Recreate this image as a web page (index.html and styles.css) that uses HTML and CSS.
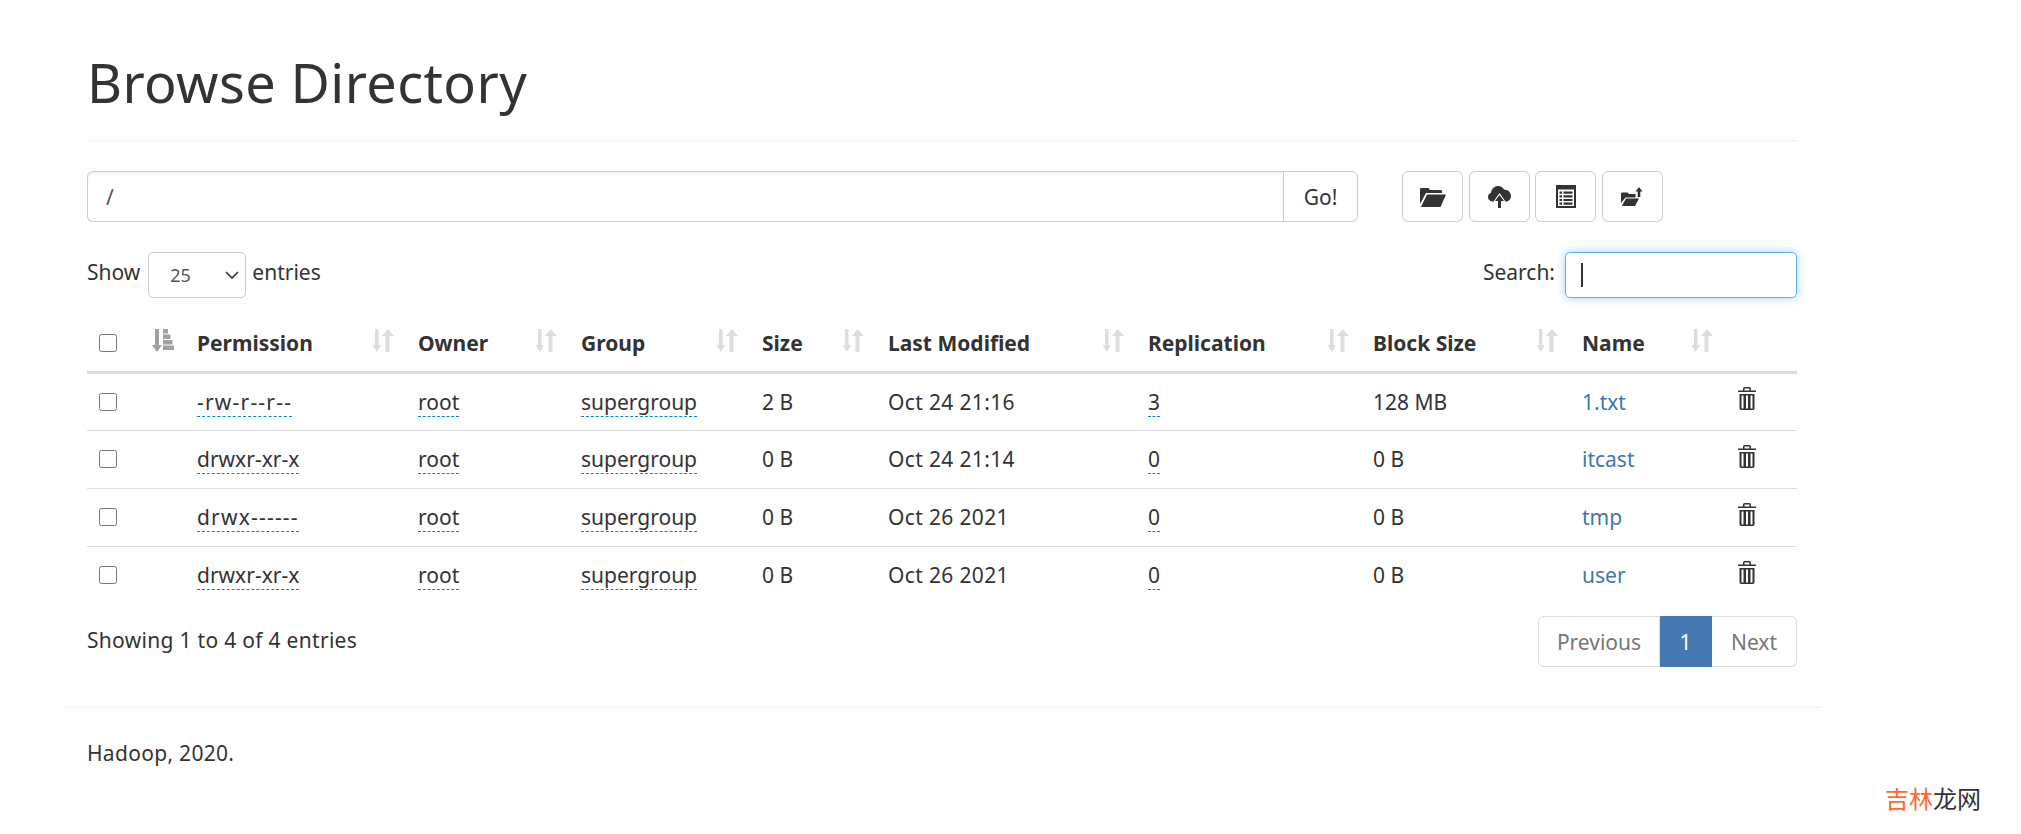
FILE: index.html
```html
<!DOCTYPE html>
<html lang="en">
<head>
    <meta charset="UTF-8">
    <title>Browse Directory</title>
    <link rel="stylesheet" href="styles.css">
</head>
<body>
    <svg class="defs" width="0" height="0">
        <symbol id="sort" viewBox="0 0 22 23">
            <path d="M3 0h3.500v16H9l-4.200 7L.5 16H3z"/>
            <path d="M13.500 23V7H10L15.800 0 22 7h-4.500v16z"/>
        </symbol>
        <symbol id="sort-num" viewBox="0 0 22 23">
            <path d="M3 0h4v16h3l-5 7-5-7h3z"/>
            <path d="M11 0h5v4.500h-5zM11 5.500h7.500V10H11zM11 11h9.500v4.500H11zM11 16.500h11V21H11z"/>
        </symbol>
        <symbol id="trash" viewBox="0 0 18 23">
            <path fill-rule="evenodd" d="M5 3.500V1.800C5 .7 5.700 0 6.800 0h4.400C12.300 0 13 .7 13 1.800v1.700h5v1.600H0V3.500zM6.500 3.500h5V1.400h-5zM1.500 7h15v14.300c0 1-.7 1.700-1.700 1.700H3.200c-1 0-1.700-.7-1.700-1.700zM3.500 8.500v13h2v-13zM8 8.500v13h2v-13zM12.500 8.500v13h2v-13z"/>
        </symbol>
    </svg>

    <div class="page">
        <div class="page-header">
            <h1>Browse Directory</h1>
        </div>

        <div class="toolbar">
            <div class="path-group">
                <input class="path-input" type="text" value="/">
                <button class="go-btn">Go!</button>
            </div>
            <div class="tool-btns">
                <button class="icon-btn">
                    <svg width="26" height="20" viewBox="0 0 26 20"><path d="M0 2.500C0 1.500.5 1 1.500 1h7L10 3h10.500C21.500 3 22 3.500 22 4.500V6H6L0 17zM7 7.500h19L20.500 20H1z"/></svg>
                </button>
                <button class="icon-btn">
                    <svg width="23" height="22" viewBox="0 0 23 22"><path d="M10 22v-7H7l4.500-6 4.500 6h-3v7zM5.500 15.500H4.800C2 15.500 0 13.300 0 11c0-2 1.300-3.500 3-4.200C3.500 3 6.300 0 10 0c2.700 0 4.800 1.400 6 3.600 3.700 0 7 2.800 7 6.400 0 3-2.100 5.500-5 5.500h-.5L11.500 7z"/></svg>
                </button>
                <button class="icon-btn">
                    <svg width="20" height="23" viewBox="0 0 20 23"><path fill-rule="evenodd" d="M0 0h20v23H0zM2 4.500v16.500h16V4.500zM3.500 6.500h2.500v2.200H3.500zM7.500 6.500h9v2.200h-9zM3.500 10.200h2.500v2.200H3.500zM7.500 10.200h9v2.200h-9zM3.500 13.900h2.500v2.200H3.500zM7.500 13.900h9v2.200h-9zM3.500 17.500h2.500v2.200H3.500zM7.500 17.500h9v2.200h-9z"/></svg>
                </button>
                <button class="icon-btn">
                    <svg width="22" height="19" viewBox="0 0 22 19"><path d="M0 7C0 6 .5 5.500 1.500 5.500h5L8 7h6.500v3.500h-10L0 16zM5 11.500h13L14 19H.8zM18 0l3.500 4.500h-2.200V10h-2.600V4.500h-2.200z"/></svg>
                </button>
            </div>
        </div>

        <div class="table-top">
            <label class="length">Show
                <select class="length-select"><option>25</option></select>
                entries</label>
            <label class="search">Search: <span class="search-box"><span class="caret"></span></span></label>
        </div>

        <table class="files">
            <colgroup>
                <col class="c-check"><col class="c-sort"><col class="c-perm"><col class="c-owner"><col class="c-group"><col class="c-size"><col class="c-mod"><col class="c-rep"><col class="c-block"><col class="c-name"><col class="c-del">
            </colgroup>
            <thead>
                <tr>
                    <th><input type="checkbox" class="check"></th>
                    <th><svg class="sort sort-active" width="22" height="23"><use href="#sort-num"/></svg></th>
                    <th><div class="th-in">Permission <svg class="sort" width="22" height="23"><use href="#sort"/></svg></div></th>
                    <th><div class="th-in">Owner <svg class="sort" width="22" height="23"><use href="#sort"/></svg></div></th>
                    <th><div class="th-in">Group <svg class="sort" width="22" height="23"><use href="#sort"/></svg></div></th>
                    <th><div class="th-in">Size <svg class="sort" width="22" height="23"><use href="#sort"/></svg></div></th>
                    <th><div class="th-in">Last Modified <svg class="sort" width="22" height="23"><use href="#sort"/></svg></div></th>
                    <th><div class="th-in">Replication <svg class="sort" width="22" height="23"><use href="#sort"/></svg></div></th>
                    <th><div class="th-in">Block Size <svg class="sort" width="22" height="23"><use href="#sort"/></svg></div></th>
                    <th><div class="th-in">Name <svg class="sort" width="22" height="23"><use href="#sort"/></svg></div></th>
                    <th></th>
                </tr>
            </thead>
            <tbody>
                <tr>
                    <td><input type="checkbox" class="check"></td><td></td>
                    <td><span class="editable dashes">-rw-r--r--</span></td>
                    <td><span class="editable">root</span></td>
                    <td><span class="editable">supergroup</span></td>
                    <td>2 B</td>
                    <td class="date">Oct 24 21:16</td>
                    <td><span class="editable">3</span></td>
                    <td>128 MB</td>
                    <td><a href="#">1.txt</a></td>
                    <td><svg class="trash" width="18" height="23"><use href="#trash"/></svg></td>
                </tr>
                <tr>
                    <td><input type="checkbox" class="check"></td><td></td>
                    <td><span class="editable">drwxr-xr-x</span></td>
                    <td><span class="editable">root</span></td>
                    <td><span class="editable">supergroup</span></td>
                    <td>0 B</td>
                    <td class="date">Oct 24 21:14</td>
                    <td><span class="editable">0</span></td>
                    <td>0 B</td>
                    <td><a href="#">itcast</a></td>
                    <td><svg class="trash" width="18" height="23"><use href="#trash"/></svg></td>
                </tr>
                <tr>
                    <td><input type="checkbox" class="check"></td><td></td>
                    <td><span class="editable dashes">drwx------</span></td>
                    <td><span class="editable">root</span></td>
                    <td><span class="editable">supergroup</span></td>
                    <td>0 B</td>
                    <td class="date">Oct 26 2021</td>
                    <td><span class="editable">0</span></td>
                    <td>0 B</td>
                    <td><a href="#">tmp</a></td>
                    <td><svg class="trash" width="18" height="23"><use href="#trash"/></svg></td>
                </tr>
                <tr>
                    <td><input type="checkbox" class="check"></td><td></td>
                    <td><span class="editable">drwxr-xr-x</span></td>
                    <td><span class="editable">root</span></td>
                    <td><span class="editable">supergroup</span></td>
                    <td>0 B</td>
                    <td class="date">Oct 26 2021</td>
                    <td><span class="editable">0</span></td>
                    <td>0 B</td>
                    <td><a href="#">user</a></td>
                    <td><svg class="trash" width="18" height="23"><use href="#trash"/></svg></td>
                </tr>
            </tbody>
        </table>

        <div class="table-bottom">
            <div class="info">Showing 1 to 4 of 4 entries</div>
            <div class="pager">
                <a class="pg pg-prev" href="#">Previous</a>
                <a class="pg pg-num active" href="#">1</a>
                <a class="pg pg-next" href="#">Next</a>
            </div>
        </div>

        <div class="footer">
            <p>Hadoop, 2020.</p>
        </div>
    </div>

    <div class="watermark"><span>吉林</span>龙网</div>
</body>
</html>
```

FILE: styles.css
```css
* { box-sizing: border-box; }

body {
    margin: 0;
    background: #fff;
    color: #333;
    font-family: "Noto Sans", "Noto Sans CJK SC", sans-serif;
    font-size: 21px;
    line-height: 30px;
}

.defs { position: absolute; }

.page {
    width: 1757px;
    margin-left: 64px;
}

.page-header {
    margin: 0 23px;
    height: 141px;
    padding-top: 49px;
    border-bottom: 1px solid #eee;
}

h1 {
    margin: 0;
    font-size: 54px;
    line-height: 66px;
    font-weight: 400;
    letter-spacing: .4px;
}

.toolbar {
    display: flex;
    margin: 30px 23px 0;
}

.path-group {
    display: flex;
    width: 1271px;
    height: 51px;
}

.path-input {
    flex: 1;
    min-width: 0;
    height: 51px;
    padding: 0 18px;
    border: 1.500px solid #ccc;
    border-right: 0;
    border-radius: 6px 0 0 6px;
    font: inherit;
    color: #555;
    box-shadow: inset 0 1.500px 1.500px rgba(0,0,0,.075);
    outline: none;
}

.go-btn {
    width: 75px;
    border: 1.500px solid #ccc;
    border-radius: 0 6px 6px 0;
    background: #fff;
    font: inherit;
    color: #333;
    padding: 0;
}

.tool-btns {
    display: flex;
    gap: 5.500px;
    margin-left: 44px;
}

.icon-btn {
    width: 61px;
    height: 51px;
    padding: 0;
    display: flex;
    align-items: center;
    justify-content: center;
    background: #fff;
    border: 1.500px solid #ccc;
    border-radius: 6px;
}

.icon-btn svg { fill: #333; }

.table-top {
    display: flex;
    justify-content: space-between;
    margin: 30px 24px 0 23px;
    height: 46px;
}

.length, .search {
    display: flex;
    align-items: flex-start;
    line-height: 40px;
}

.length-select {
    appearance: none;
    width: 98px;
    height: 46px;
    margin: 0 6px 0 8px;
    padding: 0 12px 0 21px;
    border: 1.500px solid #ccc;
    border-radius: 5px;
    background: #fff url("data:image/svg+xml,%3Csvg xmlns='http://www.w3.org/2000/svg' width='16' height='10'%3E%3Cpath d='M2 2l6 6 6-6' fill='none' stroke='%23333' stroke-width='1.600'/%3E%3C/svg%3E") no-repeat right 5px center;
    font: inherit;
    font-size: 18px;
    line-height: normal;
    color: #555;
}

.search-box {
    display: flex;
    align-items: center;
    width: 232px;
    height: 46px;
    margin-left: 10px;
    padding-left: 15px;
    border: 1.500px solid #66afe9;
    border-radius: 5px;
    box-shadow: 0 0 9px rgba(102,175,233,.6);
}

.caret {
    width: 2px;
    height: 24px;
    background: #333;
}

.files {
    width: 1710px;
    margin: 18px 0 0 23px;
    border-collapse: collapse;
    table-layout: fixed;
}

.c-check { width: 53px; }
.c-sort { width: 45px; }
.c-perm { width: 221px; }
.c-owner { width: 163px; }
.c-group { width: 181px; }
.c-size { width: 126px; }
.c-mod { width: 260px; }
.c-rep { width: 225px; }
.c-block { width: 209px; }
.c-name { width: 155px; }
.c-del { width: 72px; }

th {
    height: 56px;
    padding: 0 12px;
    text-align: left;
    font-weight: 700;
    border-bottom: 3px solid #ddd;
}

td {
    height: 58px;
    padding: 0 12px;
    border-top: 1.500px solid #ddd;
}

tbody tr:first-child td { border-top: 0; }

.th-in {
    display: flex;
    justify-content: space-between;
    align-items: center;
}

.sort {
    fill: #ddd;
    margin-bottom: 5px;
}

.sort-active {
    fill: #a0a0a0;
    display: block;
}

.check {
    display: block;
    width: 18px;
    height: 18px;
    margin: 0;
}

.editable { border-bottom: 1.500px dashed #08c; }

.dashes { letter-spacing: 1.200px; }

.date { letter-spacing: .35px; }

a {
    color: #4176b0;
    text-decoration: none;
}

.trash {
    display: block;
    fill: #333;
    margin: 0 0 6px 1px;
}

.table-bottom {
    display: flex;
    justify-content: space-between;
    margin: 12px 24px 0 23px;
}

.info {
    padding-top: 9px;
    letter-spacing: .3px;
}

.pager {
    display: flex;
    height: 51px;
}

.pg {
    display: flex;
    align-items: center;
    justify-content: center;
    color: #777;
    border: 1.500px solid #ddd;
    border-left: 0;
}

.pg-prev {
    width: 122px;
    border-left: 1.500px solid #ddd;
    border-radius: 6px 0 0 6px;
}

.pg-num { width: 52px; }

.pg-next {
    width: 85px;
    border-radius: 0 6px 6px 0;
}

.pg.active {
    background: #4679b2;
    border-color: #4679b2;
    color: #fff;
}

.footer {
    margin-top: 40px;
    padding: 30px 23px 0;
    border-top: 1.500px solid #eee;
    letter-spacing: .3px;
}

.footer p { margin: 0; }

.watermark {
    position: absolute;
    right: 40px;
    top: 784px;
    font-size: 24px;
    color: #333;
}

.watermark span { color: #ff6a2b; }
```
